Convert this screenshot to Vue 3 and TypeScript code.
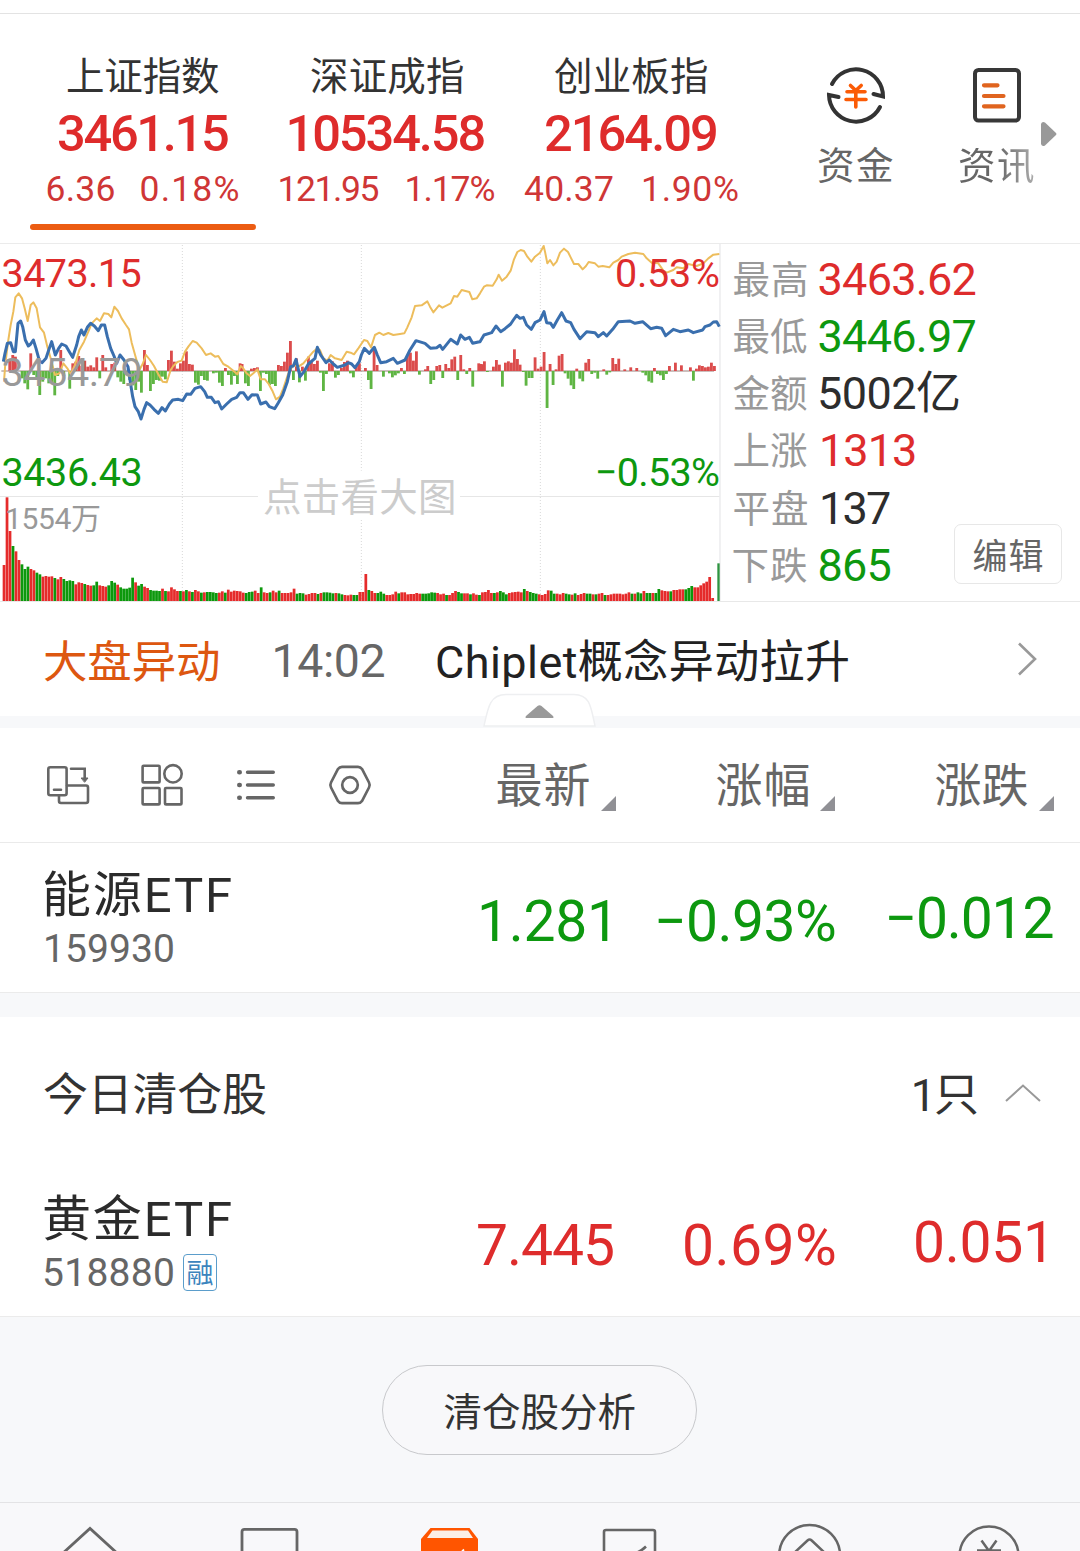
<script setup lang="ts">
import type { Directive } from 'vue'

/* Spaces a label so that its glyphs span exactly the given width. */
const fit = (el: HTMLElement, width: number) => {
  const ctx = document.createElement('canvas').getContext('2d')
  if (!ctx) return
  const style = getComputedStyle(el)
  ctx.font = `${style.fontWeight} ${style.fontSize} ${style.fontFamily}`
  const text = (el.textContent ?? '').trim()
  const m = ctx.measureText(text)
  const ink = m.actualBoundingBoxLeft + m.actualBoundingBoxRight
  el.style.width = `${width}px`
  el.style.textIndent = `${m.actualBoundingBoxLeft}px`
  el.style.letterSpacing = `${(width - ink) / Math.max(1, text.length - 1)}px`
}
const vFit: Directive<HTMLElement, number> = { mounted: (el, b) => fit(el, b.value) }

type Tone = 'up' | 'down' | 'flat'

const indices = [
  { name: '上证指数', nameW: 152, price: '3461.15', priceW: 170, diff: '6.36', diffW: 67, pct: '0.18%', pctW: 97, gap: 27, active: true },
  { name: '深证成指', nameW: 152, price: '10534.58', priceW: 195, diff: '121.95', diffW: 99, pct: '1.17%', pctW: 88, gap: 28, active: false },
  { name: '创业板指', nameW: 152, price: '2164.09', priceW: 170, diff: '40.37', diffW: 89, pct: '1.90%', pctW: 95, gap: 30, active: false },
]

const stats: { label: string; value: string; w: number; tone: Tone; dx: number }[] = [
  { label: '最高', value: '3463.62', w: 156, tone: 'up', dx: 0.5 },
  { label: '最低', value: '3446.97', w: 156, tone: 'down', dx: 0.5 },
  { label: '金额', value: '5002亿', w: 139, tone: 'flat', dx: 1 },
  { label: '上涨', value: '1313', w: 93, tone: 'up', dx: 3 },
  { label: '平盘', value: '137', w: 68, tone: 'flat', dx: 3 },
  { label: '下跌', value: '865', w: 71, tone: 'down', dx: 0.5 },
]

/* Chart series: flat x,y lists at a third of a pixel, in three time segments. */
const segments = (parts: number[][]) => {
  const out: string[] = []
  parts.forEach((p, s) => {
    for (let i = 0; i < p.length; i += 2) out.push(`${p[i] + s * 720},${p[i + 1] + 720}`)
  })
  return out.join(' ')
}
const average = segments([
  [12,425,16,370,25,300,32,255,40,215,46,172,56,160,66,175,74,205,83,243,92,195,100,187,110,205,120,262,132,278,142,320,152,355,165,405,178,400,190,370,202,385,212,402,225,375,238,330,252,305,265,275,275,250,290,235,300,243,312,220,325,222,334,232,343,200,354,213,365,235,378,255,387,268,395,308,408,355,418,390,428,372,438,345,450,360,462,378,475,403,488,425,500,427,512,390,520,378,532,366,545,362,555,335,565,320,578,303,590,308,605,325,618,345,632,340,645,350,655,348,670,372,685,380,700,392,712,403,722,378],
  [8,383,20,400,30,408,40,400,52,388,62,418,75,418,86,432,97,452,108,478,120,470,130,445,145,400,160,375,175,380,190,370,205,352,220,335,232,325,240,330,250,355,262,362,272,345,285,355,305,360,320,335,332,338,342,343,355,325,372,300,382,303,393,322,405,285,418,278,430,285,445,279,460,285,480,282,493,280,502,262,515,232,525,198,545,196,562,184,570,200,580,217,597,196,607,203,632,190,642,168,652,170,665,150,688,156,697,178,710,175],
  [0,160,12,140,20,136,38,137,50,118,56,104,66,122,80,110,92,92,102,58,112,36,122,30,132,33,142,50,154,65,165,50,180,38,191,18,195,35,202,70,210,60,220,76,230,65,240,38,252,26,264,36,272,52,282,72,295,72,308,88,318,78,326,66,345,70,355,80,368,78,388,82,400,68,415,60,425,50,445,42,465,38,490,42,500,55,515,68,535,70,550,92,560,98,580,90,590,82,610,85,625,72,650,78,670,70,685,55,700,44,718,42],
])
const price = segments([
  [10,365,15,340,22,310,32,308,40,335,46,335,54,250,62,243,68,260,76,300,85,318,92,312,100,300,108,325,118,362,126,368,138,355,148,325,155,305,166,345,176,325,185,312,198,318,208,335,218,352,230,315,236,290,244,270,252,285,262,262,272,250,283,258,295,272,304,255,314,255,322,290,332,325,342,348,350,370,360,345,372,360,384,380,390,420,398,470,405,500,415,515,423,537,432,508,440,488,450,495,462,508,475,520,486,503,496,513,508,492,518,480,535,478,548,482,560,462,572,463,585,445,602,440,614,455,622,472,634,472,645,488,655,485,665,507,680,492,695,478,710,472,720,458],
  [10,458,24,478,36,464,52,465,62,492,78,486,88,500,104,506,115,488,128,465,142,425,152,380,160,378,168,358,180,410,192,395,205,372,225,355,232,322,242,345,258,368,268,360,280,372,292,382,315,375,325,368,335,372,345,383,358,365,364,345,373,325,388,340,403,322,412,345,422,368,440,365,460,355,472,370,495,360,510,330,528,302,555,310,572,325,590,323,600,316,608,328,632,298,652,312,662,285,675,298,688,292,698,310,715,306],
  [0,305,12,285,35,278,48,258,62,275,75,266,92,252,100,240,110,226,120,235,130,232,140,255,154,268,165,248,180,240,192,215,200,248,212,250,220,262,232,240,245,218,258,243,272,248,282,268,300,296,320,275,345,278,355,290,370,278,380,288,398,268,415,245,450,243,465,250,488,245,512,266,530,262,545,265,557,287,580,268,600,275,625,270,640,278,668,270,675,260,690,255,700,246,710,245,718,260],
])

/* Momentum bars: x and bar tip; tips above the axis are red. */
const axis = 393
const momentum = [
  [29,360,38,345,46,350,66,415,74,430,83,448,92,340,101,405,110,415,119,465,128,425,137,415,146,430,155,430,164,466,173,408,182,330,191,408,209,446,218,370,227,365,236,348,245,378,254,362,263,380,272,376,281,382,290,352,299,415,308,345,317,382,335,372,344,368,353,412,362,425,371,432,380,400,389,420,398,436,407,450,416,425,424,458,433,330,442,375,451,453,460,432,469,420,478,422,487,410,496,418,505,360,514,332,523,365,532,386,541,370,550,362,559,334,568,372,577,374,586,428,595,434,604,408,613,420,622,422,640,400,649,398,658,428,667,438,676,384,685,405,694,434,703,408,712,432,720,370],
  [6,372,16,430,25,438,34,386,43,384,52,382,61,453,70,398,79,402,88,435,97,432,106,438,115,375,124,378,133,365,142,338,151,303,160,420,169,355,178,427,187,380,196,422,205,350,214,365,223,372,232,362,241,398,250,453,259,402,268,370,277,364,286,413,295,405,304,384,313,366,322,362,331,400,340,412,349,375,358,370,376,384,385,420,393,447,402,322,411,375,430,410,448,400,457,412,466,406,475,400,484,384,493,402,502,345,511,338,520,362,529,334,538,404,556,388,563,378,572,432,581,420,590,378,599,375,608,414,617,372,626,384,635,358,644,350,653,420,662,345,671,388,680,402,689,384,698,440,716,370,725,375],
  [4,372,13,364,22,396,40,380,49,360,58,374,67,440,76,368,85,364,94,368,103,328,112,357,120,374,130,396,138,437,147,414,156,414,165,352,174,386,183,380,192,336,201,504,210,372,219,435,228,388,237,347,246,342,255,400,264,416,273,436,281,447,290,386,299,416,308,424,317,368,326,357,335,402,344,398,353,416,371,388,380,404,389,397,398,354,407,372,416,356,434,388,452,382,470,384,488,398,497,406,506,424,515,428,523,384,532,402,541,406,550,420,559,402,568,378,586,368,604,376,631,382,640,422,649,386,658,376,667,378,676,382,685,380,694,368,703,378],
].flatMap((p, s) => {
  const out: { x: number; y: number; h: number; up: boolean }[] = []
  for (let i = 0; i < p.length; i += 2) {
    const up = p[i + 1] < axis
    out.push({ x: p[i] + s * 720 - 4, y: 720 + Math.min(p[i + 1], axis), h: Math.abs(p[i + 1] - axis), up })
  }
  return out
})

/* One volume bar per minute slot, with R for a rise and G for a fall. */
const heights = [
  108,311,210,165,149,123,110,96,103,96, 92,85,80,73,75,73,74,69,65,72,
  66,60,62,60,50,56,54,51,48,46, 47,58,47,45,43,47,60,55,49,41,
  37,37,40,70,56,46,51,43,39,33, 31,31,30,37,30,29,41,35,30,30,
  29,33,29,27,33,29,25,26,27,27, 26,24,25,29,25,34,28,31,30,29,
  25,24,27,28,31,24,41,26,24,26, 31,26,31,24,24,24,26,37,22,24,
  23,19,21,24,24,21,24,26,26,25, 23,24,23,20,18,17,19,18,18,27,
  27,81,33,30,24,24,28,22,18,18, 20,28,23,26,26,20,21,21,24,22,
  22,22,23,26,25,24,20,22,18,18, 24,30,27,23,23,23,20,23,19,18,
  26,27,33,24,24,26,30,26,20,24, 26,27,28,26,36,30,27,24,22,20,
  18,21,32,31,22,22,20,24,22,20, 19,23,18,21,24,22,22,20,20,22,
  24,18,18,20,22,22,22,20,22,26, 22,22,26,23,30,24,24,24,
  24,36,32,30,29,29,33,33,35,35, 35,39,45,41,41,47,53,58,72,9,
]
const tones = (
  'RRRGRRGGGR' + 'RGGRRRRGRR' + 'GGGGRRRGRR' + 'GGRRRGGGRG' + 'GGGGRGGRRG' + 'GGGRGRRRRG' +
  'RGRGRRGRGG' + 'GGRRGRRRRR' + 'RGGGRRGRRG' + 'RRGRRRRRGG' + 'GRRRRGRGGG' + 'GRGGRRRGGR' +
  'RRGRRGGGRR' + 'RRGRRRRRRR' + 'GGGGGRRRGR' + 'RRGGRRGRRG' + 'RRRRGRGGGR' + 'RRRRGRGGGR' +
  'RRRGGRRRGG' + 'RGRRRGGRGR' + 'RGRRRRRR' + 'RRGRGGRGGR' + 'GGRRRGRRRR' + 'GGGRRRRRRR'
)
const volume = heights.map((h, i) => ({ x: 8 + i * 8.97, h, up: tones[i] !== 'G' }))

const columns = [
  { name: '最新', w: 92 },
  { name: '涨幅', w: 92 },
  { name: '涨跌', w: 92 },
]
</script>

<template>
  <main class="page">
    <header class="top">
      <div v-for="ix in indices" :key="ix.name" class="index" :class="{ active: ix.active }">
        <span v-fit="ix.nameW" class="t index-name">{{ ix.name }}</span>
        <span v-fit="ix.priceW" class="t index-price">{{ ix.price }}</span>
        <div class="index-change" :style="{ gap: ix.gap + 'px' }">
          <span v-fit="ix.diffW" class="t">{{ ix.diff }}</span>
          <span v-fit="ix.pctW" class="t">{{ ix.pct }}</span>
        </div>
      </div>
      <div class="entry first">
        <svg width="64" height="64" viewBox="824 63 64 64" fill="none" stroke-linecap="round">
          <g stroke="#333" stroke-width="4">
            <path d="M832 84A27 27 0 0 1 883 96.500L873.500 94" />
            <path d="M880 107A27 27 0 0 1 829 95L838.500 97" />
          </g>
          <path d="M850.500 85.500L855.800 90.500L861.200 85.500M855.800 91V107M847 91.800H865M846 99.500H866" stroke="#fb5b06" stroke-width="3.600" />
        </svg>
        <span v-fit="75" class="t entry-name">资金</span>
      </div>
      <div class="entry">
        <svg width="64" height="64" viewBox="965 63 64 64" fill="none" stroke-linecap="round">
          <rect x="975" y="70" width="44" height="50.500" rx="3.500" stroke="#383838" stroke-width="4" />
          <path d="M984 85.300H997.500M984 96H1003.500M984 106.300H1003.500" stroke="#e0641f" stroke-width="4.200" />
        </svg>
        <span v-fit="75" class="t entry-name faded">资讯</span>
      </div>
      <svg class="more" width="16" height="26" viewBox="0 0 16 26"><path d="M0 3Q1 0 4 1.500L15 12Q16 13 15 14L4 24.500Q1 26 0 23Z" fill="#999" /></svg>
    </header>

    <section class="market">
      <div class="chart">
        <svg width="722" height="357" viewBox="0 732 2166 1071">
          <path d="M547 735V1803M1084 735V1412M1084 1560V1803M1621 735V1803" stroke="#d8d8d8" stroke-width="3" stroke-dasharray="3 6" />
          <path d="M0 1489.500H774M1380 1489.500H2160" stroke="#e6e6e6" stroke-width="3" />
          <path d="M2160 732V1803" stroke="#eeeef0" stroke-width="5" />
          <path d="M4 1113H2142" stroke="#9a7f7a" stroke-width="3" />
          <rect v-for="(b, i) in momentum" :key="'m' + i" :x="b.x" :y="b.y" width="8.500" :height="b.h" :fill="b.up ? '#db4c4c' : '#5fb543'" />
          <polyline :points="average" fill="none" stroke="#edbd5c" stroke-width="6" stroke-linejoin="round" />
          <polyline :points="price" fill="none" stroke="#3a6fae" stroke-width="9" stroke-linejoin="round" />
          <rect v-for="(b, i) in volume" :key="'v' + i" :x="b.x" :y="1803 - b.h" width="8.200" :height="b.h" :fill="b.up ? '#e52b2b' : '#0c980c'" />
          <rect x="2152" y="1690" width="7" height="113" fill="#2f9440" />
        </svg>
        <span v-fit="138" class="t mark up high">3473.15</span>
        <span v-fit="138" class="t mark mid">3454.79</span>
        <span v-fit="138" class="t mark down low">3436.43</span>
        <span v-fit="102" class="t mark up high-pct">0.53%</span>
        <span v-fit="121" class="t mark down low-pct">−0.53%</span>
        <span v-fit="93" class="t vol">1554万</span>
        <span v-fit="190" class="t hint">点击看大图</span>
      </div>
      <div class="stats">
        <div v-for="s in stats" :key="s.label" class="stat">
          <span v-fit="73.5" class="t stat-label">{{ s.label }}</span>
          <span v-fit="s.w" class="t stat-value" :class="s.tone" :style="{ marginLeft: 12 + s.dx + 'px' }">{{ s.value }}</span>
        </div>
        <button class="edit"><span v-fit="69" class="t">编辑</span></button>
      </div>
    </section>

    <section class="news">
      <span v-fit="175" class="t news-tag">大盘异动</span>
      <span v-fit="110" class="t news-time">14:02</span>
      <span v-fit="411" class="t news-title">Chiplet概念异动拉升</span>
      <svg class="news-go" width="20" height="36" viewBox="1017 641 20 36" fill="none" stroke="#999" stroke-width="2.600"><path d="M1019 643.500L1035 659L1019 674.500" /></svg>
    </section>
    <div class="band">
      <svg class="handle" width="114" height="34" viewBox="483 693 114 34">
        <path d="M484 726C488 707 490 694.500 506 694.500H574C590 694.500 591 707 595 726Z" fill="#fff" stroke="#eeeff1" stroke-width="1.500" />
        <path d="M526 716L537.500 706Q539.500 704.500 541.500 706L553 716Q554.500 718 552 718H527Q524.500 718 526 716Z" fill="#999" />
      </svg>
    </div>

    <section class="toolbar">
      <div class="tools">
        <svg width="48" height="48" viewBox="44 761 48 48" fill="none" stroke="#666" stroke-width="2.600" stroke-linecap="round">
          <rect x="48.300" y="767.300" width="18.300" height="28" rx="2" />
          <path d="M54 789.800H61M67 785.500H86Q88 785.500 88 787.500V801Q88 803 86 803H61Q59 803 59 801V796M71 768.700H84.700V778" />
          <path d="M81.500 778H88L84.800 782Z" fill="#666" stroke-width="1" />
        </svg>
        <svg width="48" height="48" viewBox="138 761 48 48" fill="none" stroke="#666" stroke-width="2.600">
          <rect x="142.600" y="765.800" width="17" height="16.600" rx="1" /><circle cx="173" cy="773.800" r="8.700" />
          <rect x="142.600" y="788" width="17" height="16.400" rx="1" /><rect x="165" y="788" width="16.500" height="16.400" rx="1" />
        </svg>
        <svg width="48" height="48" viewBox="232 761 48 48" stroke="#666" stroke-width="3.400" stroke-linecap="round">
          <path d="M247.500 772.200H273.300M247.500 785H273.300M247.500 797.800H273.300" /><path d="M239.300 772.200h.4M239.300 785h.4M239.300 797.800h.4" stroke-width="4.600" />
        </svg>
        <svg width="48" height="48" viewBox="326 761 48 48" fill="none" stroke="#666" stroke-width="2.700">
          <path d="M342 766.800H358Q360.500 766.800 362 769L369 782.500Q370.300 785 369 787.500L362 801Q360.500 803.200 358 803.200H342Q339.500 803.200 338 801L331 787.500Q329.700 785 331 782.500L338 769Q339.500 766.800 342 766.800Z" /><circle cx="350" cy="785" r="7.800" />
        </svg>
      </div>
      <div v-for="c in columns" :key="c.name" class="column">
        <span v-fit="c.w" class="t column-name">{{ c.name }}</span><i class="sort"></i>
      </div>
    </section>

    <section class="row">
      <div class="stock">
        <span v-fit="187" class="t stock-name">能源ETF</span>
        <span v-fit="127" class="t stock-code inset">159930</span>
      </div>
      <span v-fit="127" class="t figure down last">1.281</span>
      <span v-fit="177" class="t figure down">−0.93%</span>
      <span v-fit="164" class="t figure down change">−0.012</span>
    </section>

    <section class="group">
      <span v-fit="222" class="t group-name">今日清仓股</span>
      <div class="group-count"><span class="t">1</span><span v-fit="38" class="t">只</span></div>
      <svg width="36" height="20" viewBox="0 0 36 20" fill="none" stroke="#999" stroke-width="2"><path d="M1 18L18 2.500L35 18" /></svg>
    </section>
    <section class="row closed">
      <div class="stock">
        <span v-fit="187" class="t stock-name">黄金ETF</span>
        <div class="code-line"><span v-fit="129" class="t stock-code">518880</span><span class="badge">融</span></div>
      </div>
      <span v-fit="135" class="t figure up latest">7.445</span>
      <span v-fit="150" class="t figure up">0.69%</span>
      <span v-fit="128" class="t figure up change gain">0.051</span>
    </section>

    <section class="footer">
      <button class="analyse"><span v-fit="190" class="t">清仓股分析</span></button>
    </section>

    <nav class="tabs">
      <svg width="180" height="48" viewBox="0 1503 180 48" fill="none" stroke="#666" stroke-width="2.800"><path d="M62 1554L90 1528.500L118 1554" /></svg>
      <svg width="180" height="48" viewBox="180 1503 180 48" fill="none" stroke="#666" stroke-width="2.800"><rect x="242" y="1529.300" width="55" height="44" rx="2.500" /></svg>
      <svg width="180" height="48" viewBox="360 1503 180 48">
        <path d="M421 1539L430.500 1528H469.500L478 1539V1560H421Z" fill="#ff5500" /><path d="M427 1538L432.500 1530.500H468L473 1538Z" fill="#fbeee6" /><path d="M461.500 1552L464 1549.500" stroke="#fff" stroke-width="1.800" />
      </svg>
      <svg width="180" height="48" viewBox="540 1503 180 48" fill="none" stroke="#666" stroke-width="2.600"><rect x="604" y="1530" width="51" height="44" rx="2" /><path d="M631 1553.500Q638 1554 646 1546.500" /></svg>
      <svg width="180" height="48" viewBox="720 1503 180 48" fill="none" stroke="#666" stroke-width="2.500"><circle cx="809.600" cy="1555.500" r="30.500" /><path d="M793 1554L807.500 1540.500Q809.600 1538.500 811.700 1540.500L826 1554" /></svg>
      <svg width="180" height="48" viewBox="900 1503 180 48" fill="none" stroke="#666" stroke-width="2.500"><circle cx="989" cy="1556" r="29.500" /><path d="M981.500 1540.500L989 1551L996.500 1540.500M977 1550.500H1001" /></svg>
    </nav>
  </main>
</template>

<style>
body { margin: 0; background: #fff; }
</style>

<style scoped>
.page { width: 1080px; height: 1551px; overflow: hidden; background: #fff; color: #2b2b2b; font-family: Roboto, "Noto Sans CJK SC", sans-serif; }
.page * { box-sizing: border-box; }
svg { display: block; flex: none; }
button { padding: 0; font-family: inherit; }
.t { display: block; flex: none; line-height: 1; white-space: nowrap; text-align: left; }
.up { color: #de2c2c; }
.down { color: #0d980f; }
.flat { color: #2d2d2d; }

.top { position: relative; display: flex; height: 243px; padding-left: 21px; background: linear-gradient(#e3e3e3, #e3e3e3) 0 13px / 100% 1px no-repeat; }
.index { display: flex; flex-direction: column; align-items: center; width: 244px; padding-top: 58px; }
.index-name { font-size: 38.500px; color: #333; }
.index-price { margin-top: 12px; font-size: 50.600px; font-weight: 500; color: #de2b2b; }
.index-change { display: flex; margin-top: 13px; font-size: 35.500px; color: #cf3636; }
.index.active::after { content: ""; width: 226px; height: 6px; margin-top: 16px; border-radius: 3px; background: #ec5c12; }
.entry { display: flex; flex-direction: column; align-items: center; width: 141px; padding-top: 63px; }
.entry.first { margin-left: 32px; }
.entry-name { margin-top: 21px; font-size: 37.500px; color: #666; }
.entry-name.faded { color: transparent; background: linear-gradient(90deg, #666 50%, #aaa) text; }
.more { position: absolute; left: 1041px; top: 121px; }

.market { display: flex; height: 359px; border-top: 1px solid #ebebeb; border-bottom: 1px solid #e8e8e8; }
.chart { position: relative; width: 722px; }
.mark, .vol, .hint { position: absolute; }
.mark { font-size: 39.500px; }
.high { left: 2.500px; top: 9.500px; }
.mid { left: 2.500px; top: 108.500px; color: #999; }
.low { left: 2.500px; top: 209px; }
.high-pct { right: 3px; top: 9.500px; }
.low-pct { right: 3px; top: 209px; }
.vol { left: 7px; top: 260px; font-size: 30px; color: #999; }
.hint { left: 264px; top: 235px; font-size: 38.500px; color: #ccc; }
.stats { position: relative; width: 358px; padding: 12.500px 0 0 11.500px; }
.stat { display: flex; align-items: flex-start; height: 57.300px; }
.stat-label { margin-top: 5px; font-size: 37.500px; color: #999; }
.stat-value { font-size: 45px; }
.edit { position: absolute; right: 18px; top: 280px; display: flex; justify-content: center; width: 108px; height: 60px; padding-top: 15px; border: 1px solid #e7e7e7; border-radius: 7px; background: #fff; color: #666; font-size: 35px; }

.news { display: flex; align-items: flex-start; height: 114px; padding: 36px 0 0 44px; }
.news-tag { margin-top: 3px; font-size: 44.500px; color: #dd5710; }
.news-time { margin-left: 55.500px; font-size: 46.400px; color: #666; }
.news-title { margin: 2px 0 0 52.500px; font-size: 45px; color: #222; }
.news-go { margin: 3px 43px 0 auto; }
.band { position: relative; height: 12px; background: #f7f8fa; }
.handle { position: absolute; left: 483px; top: -23px; }

.toolbar { display: flex; height: 115px; border-bottom: 1px solid #eaeaea; }
.tools { display: flex; gap: 46px; width: 397px; padding: 33px 0 0 44px; }
.column { display: flex; justify-content: flex-end; width: 219px; padding-top: 34px; }
.column-name { font-size: 47px; color: #666; }
.sort { width: 15px; height: 15px; margin: 34px 0 0 11.500px; background: #909095; clip-path: polygon(100% 0, 100% 100%, 0 100%); }

.row { display: grid; grid-template-columns: 397px 219px 219px 219px; justify-items: end; height: 150px; border-bottom: 1px solid #ebebeb; }
.stock { justify-self: start; padding: 27.500px 0 0 44px; }
.stock-name { font-size: 49px; color: #2b2b2b; }
.stock-code { margin-top: 10.500px; font-size: 39px; color: #666; }
.stock-code.inset { margin-left: 2px; }
.figure { margin-top: 50px; font-size: 57px; }
.last { margin-right: 8px; }
.latest { margin-right: 3px; }
.change { margin-top: 47px; margin-right: 1.500px; }
.gain { margin-right: 10px; }
.group { display: flex; height: 150px; padding: 56px 39px 0 44px; border-top: 24px solid #f7f8fa; color: #333; font-size: 45px; }
.group-count { display: flex; gap: 0; margin: 0 31px 0 auto; }
.group svg { margin-top: 10px; }
.closed { height: 174px; padding-top: 24px; }
.code-line { display: flex; gap: 10px; }
.badge { width: 34px; height: 37px; margin-top: 10.500px; border: 1.500px solid #5b9dcb; border-radius: 4px; color: #3c84bd; font-size: 27px; line-height: 38px; text-align: center; }

.footer { display: flex; justify-content: center; height: 185px; padding: 48px 1px 0 0; background: #f7f8fa; }
.analyse { display: flex; justify-content: center; width: 315px; height: 90px; padding-top: 27.500px; border: 1px solid #c8c9cc; border-radius: 45px; background: #f8f8fa; color: #333; font-size: 38.500px; }
.tabs { display: flex; height: 49px; border-top: 1px solid #e3e3e5; background: #f8f8fa; }
</style>
